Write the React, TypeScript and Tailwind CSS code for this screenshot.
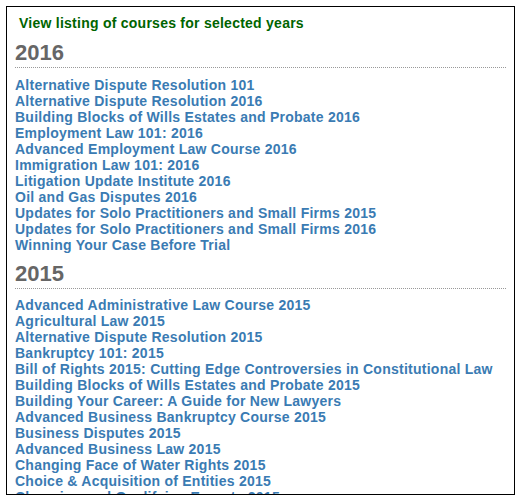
import React from 'react';

const years = [
  {
    year: '2016',
    courses: [
      'Alternative Dispute Resolution 101',
      'Alternative Dispute Resolution 2016',
      'Building Blocks of Wills Estates and Probate 2016',
      'Employment Law 101: 2016',
      'Advanced Employment Law Course 2016',
      'Immigration Law 101: 2016',
      'Litigation Update Institute 2016',
      'Oil and Gas Disputes 2016',
      'Updates for Solo Practitioners and Small Firms 2015',
      'Updates for Solo Practitioners and Small Firms 2016',
      'Winning Your Case Before Trial',
    ],
  },
  {
    year: '2015',
    courses: [
      'Advanced Administrative Law Course 2015',
      'Agricultural Law 2015',
      'Alternative Dispute Resolution 2015',
      'Bankruptcy 101: 2015',
      'Bill of Rights 2015: Cutting Edge Controversies in Constitutional Law',
      'Building Blocks of Wills Estates and Probate 2015',
      'Building Your Career: A Guide for New Lawyers',
      'Advanced Business Bankruptcy Course 2015',
      'Business Disputes 2015',
      'Advanced Business Law 2015',
      'Changing Face of Water Rights 2015',
      'Choice & Acquisition of Entities 2015',
      'Choosing and Qualifying Experts 2015',
    ],
  },
];

const App = () => {
  return (
    <div className="w-[524px] h-[502px] bg-white pt-[6px] pl-[6px] font-['Liberation_Sans',Arial,sans-serif]">
      <div className="w-[509px] h-[489px] border border-black overflow-hidden pt-[8px] px-[8px]">
        <p className="pl-[4px] text-[14px] tracking-[0.25px] leading-[16px] font-bold text-[#006400]">
          View listing of courses for selected years
        </p>
        {years.map((group, i) => (
          <div key={group.year} className={i === 0 ? 'mt-[9px]' : 'mt-[8px]'}>
            <h2 className="text-[22px] leading-[26px] font-bold text-[#666666] pb-[1px] border-b border-dotted border-[#999999]">
              {group.year}
            </h2>
            <ul className={i === 0 ? 'mt-[9px]' : 'mt-[8px]'}>
              {group.courses.map((c) => (
                <li key={c} className="text-[14px] tracking-[0.25px] leading-[16px] font-bold text-[#3a7bb3] whitespace-nowrap">
                  <a href="#">{c}</a>
                </li>
              ))}
            </ul>
          </div>
        ))}
      </div>
    </div>
  );
};

export default App;
